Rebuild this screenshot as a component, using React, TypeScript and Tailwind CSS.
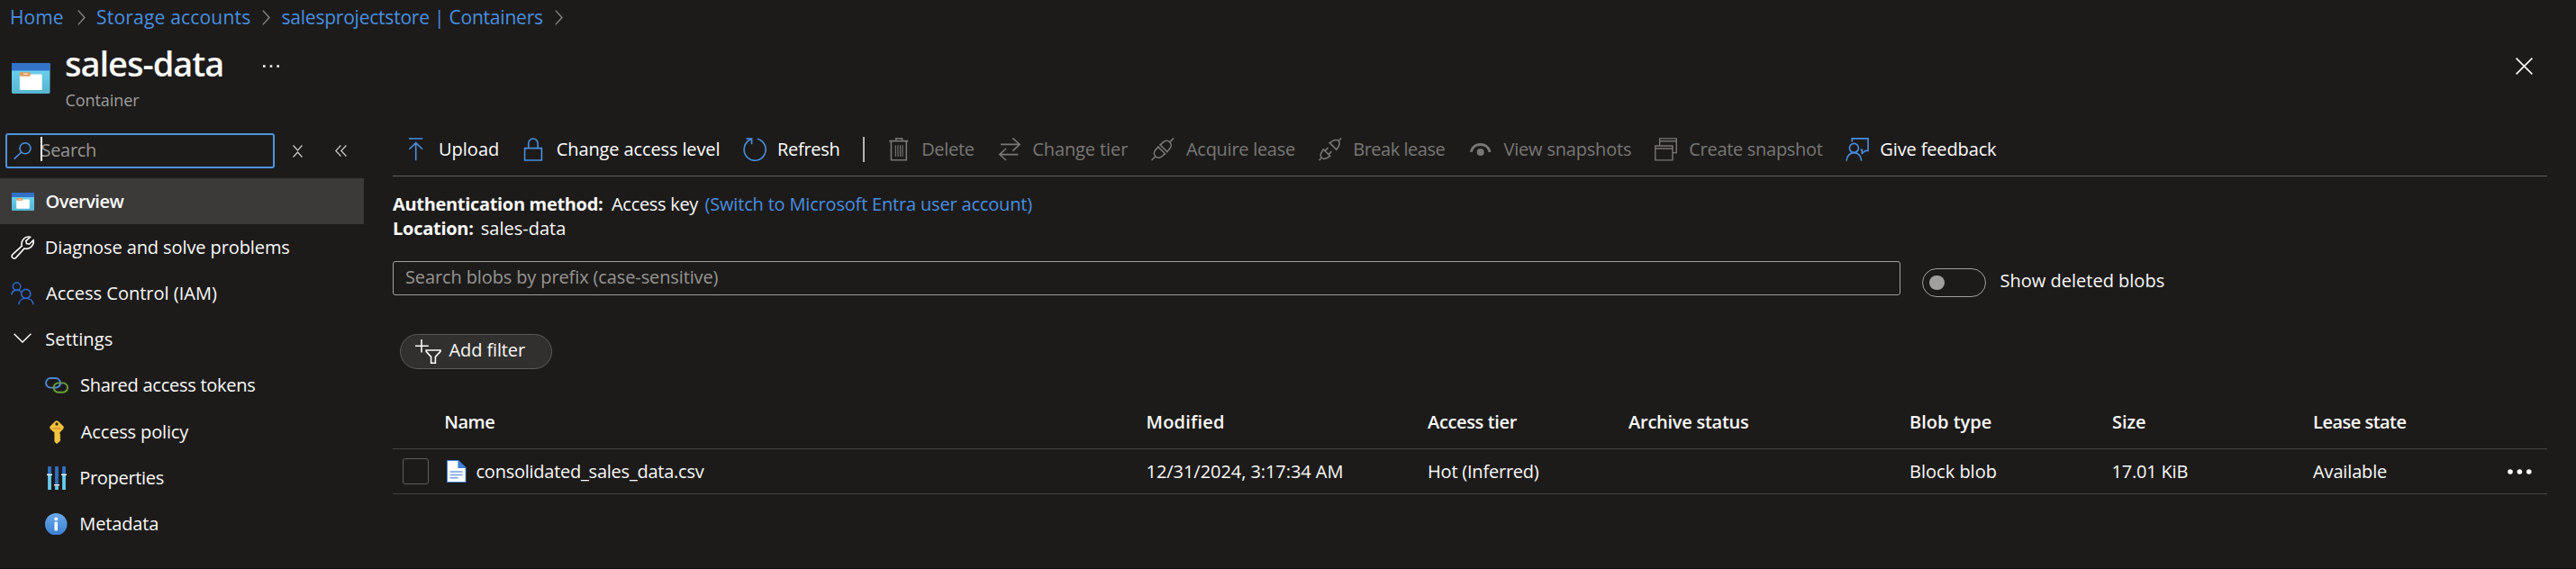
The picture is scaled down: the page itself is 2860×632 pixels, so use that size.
import React from "react";

type IconProps = { className?: string };

const Svg = ({ className = "", children, box = "0 0 26 26" }: { className?: string; children: React.ReactNode; box?: string }) => (
  <svg viewBox={box} fill="none" stroke="currentColor" strokeWidth={1.6} preserveAspectRatio="none" className={`block shrink-0 ${className}`}>
    {children}
  </svg>
);

const ContainerIcon = ({ className = "" }: IconProps) => (
  <Svg className={className} box="0 0 42.5 34.3">
    <defs>
      <linearGradient id="cyan" x1="0" y1="0" x2="0" y2="1">
        <stop offset="0" stopColor="#6fd8f5" />
        <stop offset="1" stopColor="#57b4cf" />
      </linearGradient>
    </defs>
    <rect width="42.5" height="34.3" rx="1.4" fill="url(#cyan)" stroke="none" />
    <path d="M0 8.7V1.4Q0 0 1.4 0H41.1Q42.5 0 42.5 1.4V8.7Z" fill="#3273c9" stroke="none" />
    <rect x="8.9" y="12.7" width="24.8" height="17.6" rx="0.8" fill="#fff" stroke="none" />
    <rect x="8.9" y="10.3" width="11.8" height="4.6" rx="1.2" fill="#e39a56" stroke="none" />
    <rect x="13" y="11.6" width="5" height="1.6" rx="0.6" fill="#f8dfc5" stroke="none" />
  </Svg>
);

const UploadIcon = () => (
  <Svg className="size-[26px]">
    <path d="M5 1H20.3M12.7 25.3V6M5.4 12.8L12.7 5.6L20 12.8" />
  </Svg>
);
const LockIcon = () => (
  <Svg className="size-[26px]">
    <path d="M3.6 11.6H22.4V25H3.6ZM7.7 11.6V6.4A5.2 5.4 0 0 1 18.1 6.4V11.6" />
  </Svg>
);
const RefreshIcon = () => (
  <Svg className="size-[26px]">
    <path d="M15.8 1.2A12 12.2 0 1 1 6.4 3L9 1.4M3.4 1H9.6V7.2" />
  </Svg>
);
const TrashIcon = () => (
  <Svg className="size-[26px]">
    <path d="M2.3 3.6H23.3M4.4 3.6V24.7H21.3V3.6M9.7 3.4V.8H16.6V3.4" />
    <path d="M9.3 8.3V21M12 8.3V21M14.6 8.3V21M17 8.3V21" strokeWidth="1.1" />
  </Svg>
);
const SwapIcon = () => (
  <Svg className="size-[26px]">
    <path d="M3 7.4H24.3M16.3 .4L24.2 7.4L16.3 14.6M1.8 18.6H22.3M9 12L1.8 18.6L9 25" />
  </Svg>
);
const PlugIcon = () => (
  <Svg className="size-[26px]">
    <g transform="translate(12.8 12.8) rotate(-45)">
      <path d="M-17.4 0H-11.2M11.2 0H17.4M-1.6 -5.2H-5C-13.4 -5.2 -13.4 5.2 -5 5.2H-1.6M1.6 -5.2H5C13.4 -5.2 13.4 5.2 5 5.2H1.6M-1.6 -6.4V6.4M1.6 -6.4V6.4" />
    </g>
  </Svg>
);
const UnplugIcon = () => (
  <Svg className="size-[26px]">
    <g transform="translate(12.8 12.8) rotate(-45)">
      <path d="M-17.4 0H-13.4M13.4 0H17.4M-5.4 -5C-16 -5 -16 5 -5.4 5M4.6 -5C16 -5 16 5 4.6 5M-5.4 -6.2V6.2M4.6 -6.2V6.2M-5.4 -2.8H-.4M-5.4 2.8H-.4" />
    </g>
  </Svg>
);
const EyeIcon = () => (
  <Svg className="size-[26px]">
    <path d="M2.2 15.8C4.6 4.6 20.6 4.6 23.2 15.8" strokeWidth="3" />
    <circle cx="12.7" cy="16" r="4" fill="currentColor" stroke="none" />
  </Svg>
);
const WindowsIcon = () => (
  <Svg className="size-[26px]">
    <path d="M.8 9H20V24.9H.8ZM.8 12H20M5.6 8.6V.9H24.3V16.6H20M5.6 3.8H24.3" strokeWidth="1.4" />
  </Svg>
);
const FeedbackIcon = () => (
  <Svg className="size-[26px]">
    <circle cx="9.4" cy="11.4" r="5" />
    <path d="M1 25.6C1.8 13.6 17 13.6 17.8 25.6M7.2 4.4V.9H25V14.4H22.2L18.4 17.4V13.4H16.6" />
  </Svg>
);
const WrenchIcon = () => (
  <Svg className="size-[26px]">
    <path d="M2 20.6L12.3 11.2C10.8 5.4 15.6 -.4 21.4 1.3L16.8 5.6L17.6 8.6L20.6 9.2L25 4.8C26.4 10.4 21 15.6 15 14L5.6 24.4C3 26.4 -.6 23.2 2 20.6Z" />
  </Svg>
);
const PeopleIcon = () => (
  <Svg className="size-[26px]">
    <circle cx="6.6" cy="5.2" r="4.2" />
    <circle cx="16.8" cy="13.4" r="5" />
    <path d="M.8 14.4C1.4 9 8.6 7.4 11.6 11.6M8.8 25.4C9.6 15.8 23.8 15.8 25 25.4" />
  </Svg>
);
const ChainIcon = () => (
  <Svg className="h-[18px] w-[26px]" box="0 0 26 18">
    <rect x="1" y="1" width="16" height="10.6" rx="5.3" stroke="#4f86d6" strokeWidth="1.9" />
    <rect x="9.6" y="6.4" width="15.4" height="10.4" rx="5.2" stroke="#69a33c" strokeWidth="1.9" />
    <path d="M11 11.6H11.7A5.3 5.3 0 0 0 17 6.3" stroke="#4f86d6" strokeWidth="1.9" />
  </Svg>
);
const KeyIcon = () => (
  <Svg className="h-[26px] w-[16px]" box="0 0 16 26">
    <path d="M6.4 .8Q8 -.4 9.6 .8L15.2 6.2Q16.4 7.8 15.2 9.4L11.4 13.4V15L12.4 16.2L11.4 17.4L12.4 18.8L11.4 20L12.4 21.4L11.2 23.6L8 26L5.4 23.6V13.4L.8 9.4Q-.4 7.8 .8 6.2Z" fill="#f2c23f" stroke="none" />
    <path d="M3.4 8.8H12.6" stroke="#e0962f" strokeWidth="1.5" />
    <circle cx="8" cy="4" r="1.7" fill="#3a2a12" stroke="none" />
  </Svg>
);
const SlidersIcon = () => (
  <Svg className="h-[26px] w-[22px]" box="0 0 22 26">
    <path d="M3 0V9M11 0V20.5M19 0V9" stroke="#3070c4" strokeWidth="3.8" />
    <path d="M3 10V26M19 10V26M11 21.5V26" stroke="#6accea" strokeWidth="3.8" />
    <path d="M0 9.2H6M8 20.7H14M16 9.2H22" stroke="#e6f3fa" strokeWidth="1.5" />
  </Svg>
);
const InfoIcon = () => (
  <Svg className="size-[24.5px]" box="0 0 24 24">
    <defs>
      <linearGradient id="info" x1="0" y1="0" x2="0" y2="1">
        <stop offset="0" stopColor="#6aaaec" />
        <stop offset="1" stopColor="#3a80d2" />
      </linearGradient>
    </defs>
    <circle cx="12" cy="12" r="12" fill="url(#info)" stroke="none" />
    <circle cx="12" cy="6.4" r="1.9" fill="#fff" stroke="none" />
    <rect x="10.3" y="9.6" width="3.4" height="9.6" rx=".8" fill="#fff" stroke="none" />
  </Svg>
);
const FileIcon = () => (
  <Svg className="h-[25px] w-[21.5px]" box="0 0 21.5 25">
    <path d="M0 0H13L21.5 8.3V25H0Z" fill="#3f7fd6" stroke="none" />
    <path d="M1 .9H12.4V9H20.6V24.1H1Z" fill="#fff" stroke="none" />
    <path d="M3.6 13H17.6M3.6 16.4H17.6M3.6 19.8H12.6" stroke="#6f9fe6" strokeWidth="1.5" />
  </Svg>
);
const FilterIcon = () => (
  <Svg className="mb-[1px] h-[27px] w-[29px]" box="0 0 29 27">
    <path d="M7 0V14.6M0 7.3H14.8M12.2 12H28V13.4L22.4 19.4V26.2H17.6V19.4L12.2 13.4Z" />
  </Svg>
);
const Crumb = () => (
  <Svg className="h-[17px] w-[9px]" box="0 0 9 17">
    <path d="M.8 .6L8 8.5L.8 16.4" strokeWidth="1.4" />
  </Svg>
);

const navItems = [
  { label: "Overview", icon: <ContainerIcon className="h-[20px] w-[25px]" />, row: "bg-[#3b3a39] pl-[12px] font-semibold", text: "tracking-[-0.48px]", box: "w-[26px]", ml: "ml-[12.5px]" },
  { label: "Diagnose and solve problems", icon: <WrenchIcon />, row: "pl-[12px]", text: "tracking-[-0.1px]", box: "w-[26px]", ml: "ml-[11.8px]" },
  { label: "Access Control (IAM)", icon: <PeopleIcon />, row: "pl-[12px]", text: "", box: "w-[26px] text-[#2f66c8]", ml: "ml-[13px]" },
  {
    label: "Settings",
    icon: (
      <Svg className="mb-[-1px] h-[11px] w-[20px] -translate-y-[2px]" box="0 0 20 11">
        <path d="M.6 .8L10 10L19.4 .8" strokeWidth="1.5" />
      </Svg>
    ),
    row: "pl-[12px]", text: "tracking-[0.1px]", box: "w-[26px]", ml: "ml-[12.3px]",
  },
  { label: "Shared access tokens", icon: <ChainIcon />, row: "pl-[50px]", text: "tracking-[-0.25px]", box: "w-[26px]", ml: "ml-[13px]" },
  { label: "Access policy", icon: <KeyIcon />, row: "pl-[50px]", text: "tracking-[-0.15px]", box: "w-[25px]", ml: "ml-[14.8px]" },
  { label: "Properties", icon: <SlidersIcon />, row: "pl-[50px]", text: "tracking-[-0.32px]", box: "w-[26px]", ml: "ml-[12.3px]" },
  { label: "Metadata", icon: <InfoIcon />, row: "pl-[50px]", text: "tracking-[-0.13px]", box: "w-[24.5px]", ml: "ml-[13.8px]" },
];

const primaryActions = [
  { label: "Upload", icon: <UploadIcon />, item: "w-[130px]", text: "ml-[12px]" },
  { label: "Change access level", icon: <LockIcon />, item: "w-[246px]", text: "ml-[12.8px] tracking-[-0.12px]" },
  { label: "Refresh", icon: <RefreshIcon />, item: "w-[133px]", text: "ml-[12px] tracking-[-0.29px]" },
];
const blobActions = [
  { label: "Delete", icon: <TrashIcon />, item: "w-[123px]", text: "ml-[12.2px] tracking-[-0.33px]" },
  { label: "Change tier", icon: <SwapIcon />, item: "w-[170px]", text: "ml-[12.3px] tracking-[-0.11px]" },
  { label: "Acquire lease", icon: <PlugIcon />, item: "w-[186px]", text: "ml-[13px] tracking-[-0.28px]" },
  { label: "Break lease", icon: <UnplugIcon />, item: "w-[167px]", text: "ml-[12.2px] tracking-[-0.47px]" },
  { label: "View snapshots", icon: <EyeIcon />, item: "w-[206px]", text: "ml-[12.5px] tracking-[-0.2px]" },
  { label: "Create snapshot", icon: <WindowsIcon />, item: "w-[211.5px]", text: "ml-[12.3px] tracking-[-0.3px]" },
];

const columns = [
  { head: "Modified", value: "12/31/2024, 3:17:34 AM", w: "w-[312.5px]", h: "tracking-[0.19px]", v: "tracking-[-0.06px]" },
  { head: "Access tier", value: "Hot (Inferred)", w: "w-[223px]", h: "tracking-[-0.37px]", v: "tracking-[-0.22px]" },
  { head: "Archive status", value: "", w: "w-[312px]", h: "tracking-[-0.26px]", v: "" },
  { head: "Blob type", value: "Block blob", w: "w-[224.5px]", h: "", v: "" },
  { head: "Size", value: "17.01 KiB", w: "w-[223.5px]", h: "tracking-[-0.05px] pl-[0.5px]", v: "tracking-[-0.21px]" },
  { head: "Lease state", value: "Available", w: "w-[216px]", h: "tracking-[-0.52px]", v: "tracking-[-0.16px]" },
];

export default function App() {
  return (
    <div className="flex h-[632px] w-[2860px] flex-col overflow-hidden whitespace-nowrap border-b border-[#131013] bg-[#1c1b19] font-['Open_Sans','Noto_Sans',sans-serif] text-[20px] leading-[28px] text-[#fbfaf9]">
      <nav className="flex h-[40px] items-center pb-[2px] text-[21px] text-[#4a8fe0]">
        <span className="ml-[11px] w-[74.5px] tracking-[0.1px]">Home</span>
        <span className="w-[21.5px] text-[#8a8886]"><Crumb /></span>
        <span className="w-[183.5px] tracking-[0.2px]">Storage accounts</span>
        <span className="w-[22px] text-[#8a8886]"><Crumb /></span>
        <span className="w-[303px] tracking-[-0.22px]">salesprojectstore | Containers</span>
        <span className="text-[#8a8886]"><Crumb /></span>
      </nav>

      <header className="flex h-[108px]">
        <ContainerIcon className="mt-[29.5px] ml-[13px] h-[34px] w-[42.5px]" />
        <div className="ml-[16.5px] flex flex-col pt-[6px]">
          <div className="flex items-center">
            <h1 className="w-[220px] text-[38px] leading-[48px] font-semibold tracking-[-1.02px]">sales-data</h1>
            <Svg className="mt-[7px] h-[3px] w-[18px]" box="0 0 18 3">
              <path d="M0 1.5H2.6M7.7 1.5H10.3M15.4 1.5H18" strokeWidth="2.6" />
            </Svg>
          </div>
          <p className="mt-[4.5px] ml-[0.5px] text-[18px] leading-[24px] tracking-[-0.08px] text-[#a09e9c]">Container</p>
        </div>
        <button className="mt-[24px] mr-[48px] ml-auto size-[19px]" aria-label="Close">
          <Svg className="size-[19px]" box="0 0 19 19">
            <path d="M.6 .6L18.4 18.4M18.4 .6L.6 18.4" />
          </Svg>
        </button>
      </header>

      <div className="flex">
        <aside className="flex w-[404px] flex-col">
          <div className="flex h-[39px] items-center">
            <div className="relative ml-[6px] flex h-[39px] w-[299px] items-center rounded-[3px] border-2 border-[#4f93e0] pl-[7px] text-[#979593]">
              <Svg className="h-[19px] w-[20px] text-[#4a8fe0]" box="0 0 20 19">
                <circle cx="13" cy="6.8" r="6" />
                <path d="M8.8 11L.6 18.6" />
              </Svg>
              <span className="ml-[10.5px] pb-[2px] tracking-[-0.31px]">Search</span>
              <span className="absolute top-[2px] left-[37px] h-[27px] w-[2px] bg-white" />
            </div>
            <Svg className="mt-[1px] ml-[20px] h-[14px] w-[11px] text-[#c8c6c4]" box="0 0 11 14">
              <path d="M.5 .5L5.5 6L10.5 .5M.5 13.5L5.5 8L10.5 13.5" strokeWidth="1.3" />
            </Svg>
            <Svg className="ml-[36px] h-[13px] w-[13px] text-[#c8c6c4]" box="0 0 13 13">
              <path d="M6.4 .5L.8 6.5L6.4 12.5M12.4 .5L6.8 6.5L12.4 12.5" strokeWidth="1.3" />
            </Svg>
          </div>
          <ul className="mt-[11px]">
            {navItems.map((n) => (
              <li key={n.label} className={`flex h-[51.2px] items-center ${n.row}`}>
                <span className={`flex shrink-0 justify-center ${n.box}`}>{n.icon}</span>
                <span className={`${n.ml} ${n.text}`}>{n.label}</span>
              </li>
            ))}
          </ul>
        </aside>

        <main className="ml-[32px] w-[2392px]">
          <div className="flex h-[48px] items-center border-b border-[#605e5c] pt-[4px] pb-[15px] pl-[13px]">
            {primaryActions.map((a) => (
              <div key={a.label} className={`flex items-center text-[#4a8fe0] ${a.item}`}>
                {a.icon}
                <span className={`text-white ${a.text}`}>{a.label}</span>
              </div>
            ))}
            <div className="w-[27px]"><div className="h-[28px] w-[2px] bg-[#b5b3b1]" /></div>
            {blobActions.map((a) => (
              <div key={a.label} className={`flex items-center text-[#797775] ${a.item}`}>
                {a.icon}
                <span className={a.text}>{a.label}</span>
              </div>
            ))}
            <div className="flex items-center text-[#4a8fe0]">
              <FeedbackIcon />
              <span className="ml-[12.8px] tracking-[-0.13px] text-white">Give feedback</span>
            </div>
          </div>

          <div className="pt-[17px] leading-[27px]">
            <p className="flex">
              <b className="w-[243px] tracking-[-0.32px]">Authentication method:</b>
              <span className="w-[103.5px] tracking-[-0.3px]">Access key</span>
              <a className="tracking-[-0.18px] text-[#4a8fe0]">(Switch to Microsoft Entra user account)</a>
            </p>
            <p className="flex">
              <b className="w-[97.8px] tracking-[-0.27px]">Location:</b>
              <span>sales-data</span>
            </p>
          </div>

          <div className="mt-[23px] flex h-[40px]">
            <div className="flex h-[38px] w-[1674px] items-center rounded-[3px] border border-[#a19f9d] pb-[3px] pl-[13px] tracking-[-0.12px] text-[#979593]">
              Search blobs by prefix (case-sensitive)
            </div>
            <div className="mt-[8px] ml-[24px] flex h-[32px] w-[71px] items-center rounded-full border border-[#a19f9d] pl-[7px]">
              <span className="size-[16.5px] rounded-full bg-[#a19f9d]" />
            </div>
            <span className="mt-[8px] ml-[15.6px]">Show deleted blobs</span>
          </div>

          <button className="mt-[41px] ml-[8px] flex h-[39px] w-[169px] items-center rounded-full border border-[#5c5a58] bg-[#31302e] pl-[16px]">
            <FilterIcon />
            <span className="ml-[8.6px] pb-[3px] tracking-[-0.13px]">Add filter</span>
          </button>

          <div className="mt-[30px] flex h-[59px] items-center border-b border-[#454341] font-semibold">
            <span className="w-[836.6px] pl-[57.2px] tracking-[-0.45px]">Name</span>
            {columns.map((c) => (
              <span key={c.head} className={`${c.w} ${c.h}`}>{c.head}</span>
            ))}
          </div>
          <div className="flex h-[50px] items-center border-b border-[#454341]">
            <span className="ml-[11px] h-[29px] w-[29px] rounded-[3px] border border-[#605e5c]" />
            <span className="ml-[20px]"><FileIcon /></span>
            <span className="ml-[11px] w-[744.1px] tracking-[-0.24px]">consolidated_sales_data.csv</span>
            {columns.map((c) => (
              <span key={c.head} className={`${c.w} ${c.v}`}>{c.value}</span>
            ))}
            <Svg className="h-[6px] w-[27px]" box="0 0 27 6">
              <g fill="currentColor" stroke="none">
                <circle cx="3" cy="3" r="2.8" />
                <circle cx="13.4" cy="3" r="2.8" />
                <circle cx="23.8" cy="3" r="2.8" />
              </g>
            </Svg>
          </div>
        </main>
      </div>
    </div>
  );
}
